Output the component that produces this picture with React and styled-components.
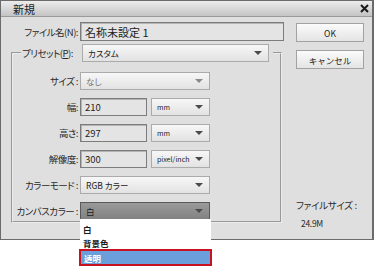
import React from "react";
import styled, { createGlobalStyle } from "styled-components";

const GlobalStyle = createGlobalStyle`
  html, body {
    margin: 0;
    padding: 0;
    background: #ffffff;
  }
  body {
    font-family: "Noto Sans CJK JP", "Noto Sans", sans-serif;
    font-size: 9px;
    color: #1e1e1e;
    font-feature-settings: "palt";
  }
`;

const Page = styled.div`
  width: 374px;
  height: 266px;
  background: #ffffff;
`;

const Dialog = styled.div`
  width: 374px;
  height: 240px;
  box-sizing: border-box;
  border: 1px solid #6b6b6b;
  border-right-width: 2px;
  background: #dfdfdf;
  display: flex;
  flex-direction: column;
`;

const TitleBar = styled.div`
  height: 15px;
  flex: none;
  display: flex;
  align-items: center;
  justify-content: space-between;
  padding: 0 3px 0 12px;
  background: linear-gradient(#ececec, #c4c4c4);
  border-bottom: 1px solid #9a9a9a;
  font-size: 11px;
  color: #222;
`;

const Body = styled.div`
  flex: 1;
  display: flex;
  padding-top: 5px;
`;

const LeftCol = styled.div`
  width: 290px;
  flex: none;
`;

const RightCol = styled.div`
  width: 68px;
  margin-left: 5px;
  display: flex;
  flex-direction: column;
  padding-top: 1px;
  padding-bottom: 7px;
`;

const Row = styled.div`
  display: grid;
  grid-template-columns: ${(p) => p.$labelWidth}px auto;
  column-gap: 2px;
  align-items: center;
`;

const Label = styled.label`
  text-align: right;
  white-space: nowrap;
  color: #2a2a2a;
  font-size: 9.5px;
  letter-spacing: -0.5px;
  u {
    text-decoration: underline;
  }
`;

const Field = styled.div`
  box-sizing: border-box;
  width: ${(p) => p.$width}px;
  height: ${(p) => p.$height || 18}px;
  border: 1px solid #7c7c7c;
  box-shadow: inset 1px 1px 0 #b4b4b4;
  background: #e4e4e4;
  padding: 0 4px;
  display: flex;
  align-items: center;
  font-size: ${(p) => (p.$large ? 11 : 9.5)}px;
  color: #222;
`;

const Select = styled.div`
  position: relative;
  box-sizing: border-box;
  width: ${(p) => p.$width}px;
  height: 18px;
  border: 1px solid ${(p) => (p.$active ? "#595959" : "#ababab")};
  background: ${(p) =>
    p.$active
      ? "linear-gradient(#9a9a9a, #828282)"
      : "linear-gradient(#f7f7f7, #e2e2e2)"};
  display: flex;
  align-items: center;
  justify-content: space-between;
  padding: 0 6px 0 5px;
  font-size: ${(p) => (p.$small ? 7 : 8.5)}px;
  color: ${(p) => (p.$disabled ? "#777" : "#222")};
  white-space: nowrap;
`;

const Arrow = styled.span`
  flex: none;
  margin-left: 3px;
  width: 0;
  height: 0;
  border-left: 4px solid transparent;
  border-right: 4px solid transparent;
  border-top: 4px solid ${(p) => (p.$disabled ? "#8a8a8a" : "#4a4a4a")};
`;

const Pair = styled.div`
  display: flex;
  gap: 4px;
`;

const Group = styled.div`
  margin: 3px 0 0 10px;
  width: 271px;
`;

const GroupHead = styled.div`
  height: 18px;
  display: flex;
`;

const HeadLine = styled.div`
  margin-top: 8px;
  border-top: 2px groove #ececec;
  ${(p) =>
    p.$side === "left"
      ? "border-left: 2px groove #ececec;"
      : "border-right: 2px groove #ececec;"}
  width: ${(p) => (p.$side === "left" ? "8px" : "auto")};
  flex: ${(p) => (p.$side === "left" ? "none" : "1")};
`;

const Legend = styled.div`
  padding: 0 4px 0 1px;
  display: flex;
  align-items: center;
  gap: 9px;
`;

const GroupBody = styled.div`
  border: 2px groove #ececec;
  border-top: none;
  padding: 10px 0 1px 0;
  display: flex;
  flex-direction: column;
  gap: 8px;
`;

const Button = styled.button`
  box-sizing: border-box;
  width: 68px;
  height: 19px;
  margin-bottom: 8px;
  border: 1px solid #a2a2a2;
  background: linear-gradient(#fbfbfb, #e4e4e4);
  font-family: inherit;
  font-size: 8.5px;
  color: #222;
  padding: 0;
`;

const SizeInfo = styled.div`
  margin-top: ${(p) => (p.$push ? "auto" : "0")};
  line-height: 18px;
  padding-left: ${(p) => p.$indent}px;
  white-space: nowrap;
  font-size: ${(p) => (p.$small ? 8.5 : 9.5)}px;
  letter-spacing: -0.3px;
  color: #2a2a2a;
`;

const Menu = styled.div`
  position: absolute;
  top: 100%;
  left: -1px;
  width: 131px;
  background: #ffffff;
  padding-top: 3px;
  z-index: 2;
`;

const MenuItem = styled.div`
  box-sizing: border-box;
  height: ${(p) => (p.$selected ? 17 : 14)}px;
  display: flex;
  align-items: center;
  padding-left: 3px;
  font-size: 8.5px;
  font-weight: 700;
  color: ${(p) => (p.$selected ? "#ffffff" : "#1a1a1a")};
  background: ${(p) => (p.$selected ? "#6a9fdb" : "transparent")};
  border: ${(p) => (p.$selected ? "2px solid #c8121f" : "none")};
  margin: ${(p) => (p.$selected ? "-1px -1px 0 -1px" : "0")};
`;

const CloseIcon = () => (
  <svg width="9" height="9" viewBox="0 0 9 9">
    <path d="M1 1 L8 8 M8 1 L1 8" stroke="#1a1a1a" strokeWidth="2" />
  </svg>
);

const Dropdown = ({ width, value, active, disabled, small, children }) => (
  <Select $width={width} $active={active} $disabled={disabled} $small={small}>
    <span>{value}</span>
    <Arrow $disabled={disabled} />
    {children}
  </Select>
);

export default function App() {
  const labelWidth = 65;
  return (
    <Page>
      <GlobalStyle />
      <Dialog>
        <TitleBar>
          <span>新規</span>
          <CloseIcon />
        </TitleBar>
        <Body>
          <LeftCol>
            <Row $labelWidth={77}>
              <Label>ファイル名(N):</Label>
              <Field $width={204} $height={19} $large>
                名称未設定 1
              </Field>
            </Row>
            <Group>
              <GroupHead>
                <HeadLine $side="left" />
                <Legend>
                  <Label>
                    プリセット(<u>P</u>):
                  </Label>
                  <Dropdown width={187} value="カスタム" />
                </Legend>
                <HeadLine $side="right" />
              </GroupHead>
              <GroupBody>
                <Row $labelWidth={labelWidth}>
                  <Label>サイズ :</Label>
                  <Dropdown width={130} value="なし" disabled />
                </Row>
                <Row $labelWidth={labelWidth}>
                  <Label>幅:</Label>
                  <Pair>
                    <Field $width={67}>210</Field>
                    <Dropdown width={59} value="mm" small />
                  </Pair>
                </Row>
                <Row $labelWidth={labelWidth}>
                  <Label>高さ:</Label>
                  <Pair>
                    <Field $width={67}>297</Field>
                    <Dropdown width={59} value="mm" small />
                  </Pair>
                </Row>
                <Row $labelWidth={labelWidth}>
                  <Label>解像度:</Label>
                  <Pair>
                    <Field $width={67}>300</Field>
                    <Dropdown width={59} value="pixel/inch" small />
                  </Pair>
                </Row>
                <Row $labelWidth={labelWidth}>
                  <Label>カラーモード :</Label>
                  <Dropdown width={130} value="RGB カラー" />
                </Row>
                <Row $labelWidth={labelWidth}>
                  <Label>カンバスカラー :</Label>
                  <Dropdown width={130} value="白" active>
                    <Menu>
                      <MenuItem>白</MenuItem>
                      <MenuItem>背景色</MenuItem>
                      <MenuItem $selected>透明</MenuItem>
                    </Menu>
                  </Dropdown>
                </Row>
              </GroupBody>
            </Group>
          </LeftCol>
          <RightCol>
            <Button>OK</Button>
            <Button>キャンセル</Button>
            <SizeInfo $indent={0} $push>
              ファイルサイズ :
            </SizeInfo>
            <SizeInfo $indent={5} $small>
              24.9M
            </SizeInfo>
          </RightCol>
        </Body>
      </Dialog>
    </Page>
  );
}
